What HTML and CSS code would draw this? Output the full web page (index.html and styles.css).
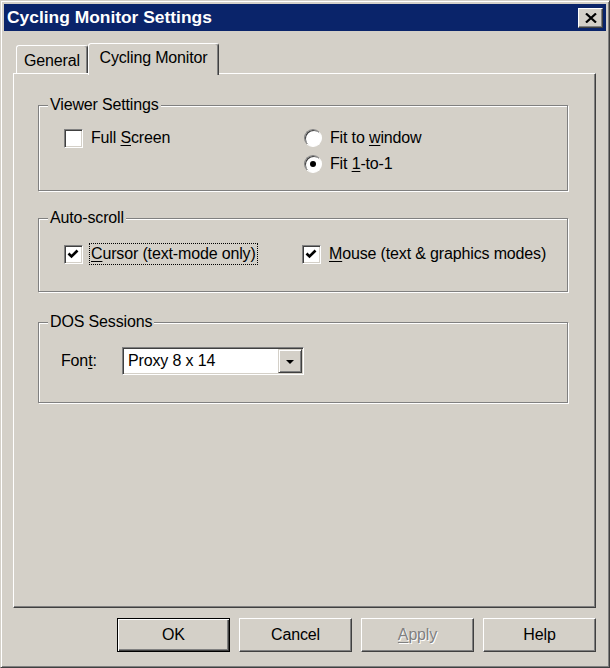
FILE: index.html
```html
<!DOCTYPE html>
<html lang="en">
<head>
    <meta charset="UTF-8">
    <title>Cycling Monitor Settings</title>
    <link rel="stylesheet" href="styles.css">
</head>
<body>

    <div class="dialog">
        <div class="titlebar">
            <span class="title">Cycling Monitor Settings</span>
            <button class="close-btn" aria-label="Close">
                <svg width="12" height="10" viewBox="0 0 12 10"><path d="M1 0.5 L11 9.5 M11 0.5 L1 9.5" stroke="#000" stroke-width="2.2" fill="none"/></svg>
            </button>
        </div>

        <div class="tabs">
            <div class="tab tab-general">General</div>
            <div class="tab tab-monitor active">Cycling Monitor</div>
        </div>

        <div class="page">
            <div class="group group-viewer">
                <div class="group-title">Viewer Settings</div>
                <div class="options">
                    <label class="option">
                        <span class="check"></span>
                        <span class="caption">Full <u>S</u>creen</span>
                    </label>
                    <label class="option">
                        <span class="radio"></span>
                        <span class="caption">Fit to <u>w</u>indow</span>
                    </label>
                    <label class="option col-2">
                        <span class="radio on"></span>
                        <span class="caption">Fit <u>1</u>-to-1</span>
                    </label>
                </div>
            </div>

            <div class="group group-scroll">
                <div class="group-title">Auto-scroll</div>
                <div class="options">
                    <label class="option">
                        <span class="check"><svg width="17" height="17" viewBox="0 0 17 17"><polyline points="3.5,7.5 6.5,10.5 12.5,4.5" stroke="#000" stroke-width="2.6" fill="none"/></svg></span>
                        <span class="caption focused"><u>C</u>ursor (text-mode only)</span>
                    </label>
                    <label class="option">
                        <span class="check"><svg width="17" height="17" viewBox="0 0 17 17"><polyline points="3.5,7.5 6.5,10.5 12.5,4.5" stroke="#000" stroke-width="2.6" fill="none"/></svg></span>
                        <span class="caption"><u>M</u>ouse (text &amp; graphics modes)</span>
                    </label>
                </div>
            </div>

            <div class="group group-dos">
                <div class="group-title">DOS Sessions</div>
                <div class="font-row">
                    <span class="font-label">Fon<u>t</u>:</span>
                    <div class="combo">
                        <span class="combo-value">Proxy 8 x 14</span>
                        <span class="combo-btn"><span class="arrow"></span></span>
                    </div>
                </div>
            </div>
        </div>

        <div class="buttons">
            <button class="btn default">OK</button>
            <button class="btn">Cancel</button>
            <button class="btn disabled"><u>A</u>pply</button>
            <button class="btn">Help</button>
        </div>
    </div>

</body>
</html>
```

FILE: styles.css
```css
body {
    margin: 0;
    background-color: #d4d0c8;
    font-family: "Liberation Sans", Arial, sans-serif;
    font-size: 16px;
    letter-spacing: -0.15px;
    color: #000;
}
u {
    text-underline-offset: 2px;
}

/* window frame */
.dialog {
    width: 610px;
    height: 668px;
    box-sizing: border-box;
    padding: 3px;
    border: 1px solid;
    border-color: #d4d0c8 #404040 #404040 #d4d0c8;
    box-shadow: inset 1px 1px 0 #fff, inset -1px -1px 0 #808080;
    background-color: #d4d0c8;
}
.titlebar {
    height: 27px;
    display: flex;
    align-items: center;
    justify-content: space-between;
    padding: 0 3px;
    background-color: #0a246a;
    color: #fff;
    font-weight: bold;
    font-size: 17.4px;
    letter-spacing: 0;
}
.close-btn {
    width: 25px;
    height: 20px;
    padding: 0;
    display: flex;
    align-items: center;
    justify-content: center;
    background-color: #d4d0c8;
    border: 1px solid;
    border-color: #fff #404040 #404040 #fff;
    box-shadow: inset -1px -1px 0 #808080;
}

/* tabs */
.tabs {
    display: flex;
    align-items: flex-end;
    height: 30px;
    margin: 12px 0 0 12px;
}
.tab {
    height: 28px;
    box-sizing: border-box;
    padding-top: 6px;
    line-height: 18px;
    text-align: center;
    border: 1px solid;
    border-bottom: none;
    border-color: #fff #404040 transparent #fff;
    border-radius: 3px 3px 0 0;
    box-shadow: inset -1px 0 0 #808080;
    background-color: #d4d0c8;
}
.tab-general {
    width: 72px;
}
.tab-monitor {
    width: 131px;
}
.tab.active {
    height: 32px;
    padding-top: 5px;
    margin-bottom: -2px;
    position: relative;
    z-index: 1;
}

/* tab page */
.page {
    width: 583px;
    height: 535px;
    box-sizing: border-box;
    margin-left: 9px;
    padding: 31px 0 0 24px;
    border: 1px solid;
    border-color: #fff #404040 #404040 #fff;
    box-shadow: inset -1px -1px 0 #808080;
}
.group {
    width: 530px;
    box-sizing: border-box;
    border: 1px solid #808080;
    box-shadow: inset 1px 1px 0 #fff, 1px 1px 0 #fff;
}
.group-viewer {
    height: 86px;
}
.group-scroll {
    height: 74px;
    margin-top: 27px;
}
.group-dos {
    height: 81px;
    margin-top: 30px;
}
.group-title {
    width: fit-content;
    margin: -11px 0 0 9px;
    padding: 0 2px;
    line-height: 20px;
    background-color: #d4d0c8;
}

.options {
    display: grid;
    grid-template-columns: 240px auto;
    grid-auto-rows: 26px;
    margin: 10px 0 0 25px;
}
.group-scroll .options {
    grid-template-columns: 238px auto;
    margin-top: 13px;
}
.col-2 {
    grid-column: 2;
}
.option {
    display: flex;
    align-items: center;
    gap: 6px;
}
.caption {
    line-height: 20px;
    padding: 0 1px;
    border: 1px dotted transparent;
}
.caption.focused {
    border-color: #000;
}
.check {
    width: 19px;
    height: 19px;
    box-sizing: border-box;
    border: 1px solid;
    border-color: #808080 #fff #fff #808080;
    box-shadow: inset 1px 1px 0 #404040, inset -1px -1px 0 #d4d0c8;
    background-color: #fff;
}
.check svg {
    display: block;
}
.radio {
    width: 18px;
    height: 18px;
    box-sizing: border-box;
    border-radius: 50%;
    border: 1px solid;
    border-color: #808080 #fff #fff #808080;
    box-shadow: inset 1px 1px 0 #404040;
    background-color: #fff;
    display: flex;
    align-items: center;
    justify-content: center;
}
.radio.on::after {
    content: "";
    width: 6px;
    height: 6px;
    border-radius: 50%;
    background-color: #000;
}

/* font picker */
.font-row {
    display: flex;
    align-items: center;
    margin: 15px 0 0 22px;
}
.font-label {
    width: 61px;
}
.combo {
    display: flex;
    width: 182px;
    height: 28px;
    box-sizing: border-box;
    padding: 1px;
    border: 1px solid;
    border-color: #808080 #fff #fff #808080;
    box-shadow: inset 1px 1px 0 #404040, inset -1px -1px 0 #d4d0c8;
    background-color: #fff;
}
.combo-value {
    flex: 1;
    padding-left: 4px;
    line-height: 24px;
}
.combo-btn {
    width: 24px;
    height: 24px;
    box-sizing: border-box;
    display: flex;
    align-items: center;
    justify-content: center;
    border: 1px solid;
    border-color: #d4d0c8 #404040 #404040 #d4d0c8;
    box-shadow: inset 1px 1px 0 #fff, inset -1px -1px 0 #808080;
    background-color: #d4d0c8;
}
.arrow {
    width: 0;
    height: 0;
    margin-top: 2px;
    border-left: 4px solid transparent;
    border-right: 4px solid transparent;
    border-top: 4px solid #000;
}

/* dialog buttons */
.buttons {
    display: flex;
    justify-content: flex-end;
    gap: 9px;
    width: 583px;
    margin: 10px 0 0 9px;
}
.btn {
    width: 113px;
    height: 34px;
    padding: 0;
    font: inherit;
    letter-spacing: inherit;
    color: #000;
    background-color: #d4d0c8;
    border: 1px solid;
    border-color: #fff #404040 #404040 #fff;
    box-shadow: inset -1px -1px 0 #808080;
}
.btn.default {
    border-color: #000;
    box-shadow: inset 1px 1px 0 #fff, inset -1px -1px 0 #404040, inset -2px -2px 0 #808080;
}
.btn.disabled {
    color: #808080;
    text-shadow: 1px 1px 0 #fff;
}
```
